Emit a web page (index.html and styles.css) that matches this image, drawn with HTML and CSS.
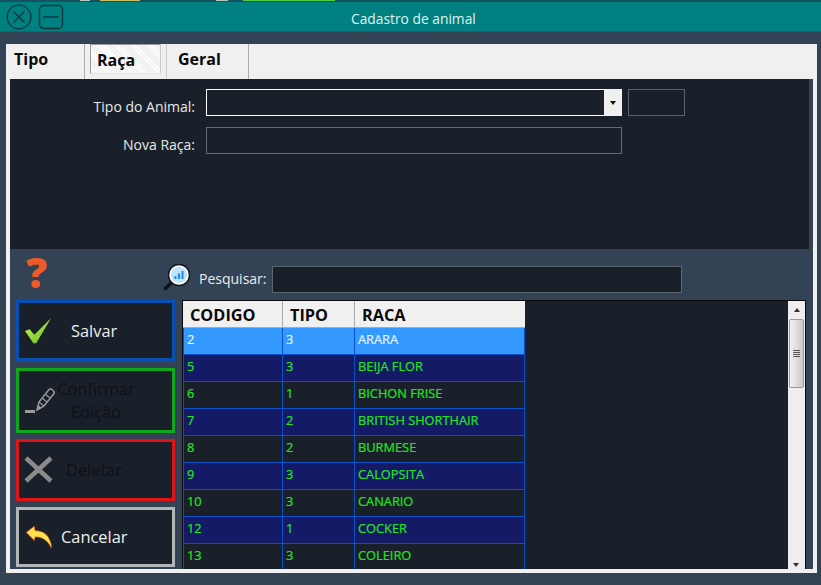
FILE: index.html
```html
<!DOCTYPE html>
<html lang="pt">
<head>
<meta charset="utf-8">
<title>Cadastro de animal</title>
<link rel="stylesheet" href="styles.css">
</head>
<body>
<div class="app">
  <header class="titlebar">
    <div class="winbtns">
      <svg class="winicon" width="26" height="26" viewBox="0 0 26 26"><circle cx="13" cy="13" r="11.800"/><path d="M7.500 7.500l11 11M18.500 7.500l-11 11"/></svg>
      <svg class="winicon" width="26" height="26" viewBox="0 0 26 26"><rect x="1.500" y="1.500" width="23" height="23" rx="4"/><path d="M5 13h16"/></svg>
    </div>
    <span class="wintitle">Cadastro de animal</span>
  </header>
  <main class="frame">
    <nav class="tabs">
      <span class="tab tab-tipo">Tipo</span>
      <span class="tab tab-raca">Raça</span>
      <span class="tab tab-geral">Geral</span>
    </nav>
    <section class="panel">
      <section class="form">
        <div class="formrow">
          <label class="flabel">Tipo do Animal:</label>
          <div class="combo"><span class="combo-arrow"></span></div>
          <div class="smallbox"></div>
        </div>
        <div class="formrow">
          <label class="flabel">Nova Raça:</label>
          <div class="input"></div>
        </div>
      </section>
      <section class="lower">
        <div class="toolbar">
          <span class="help">?</span>
          <svg class="searchicon" width="28" height="28" viewBox="0 0 28 28">
            <path d="M10 18L2.500 25.500" stroke="#111" stroke-width="3.500" stroke-linecap="round"/>
            <circle cx="16" cy="12" r="10.500" fill="#fff" stroke="#14181e" stroke-width="1.500"/>
            <circle cx="16" cy="12" r="8" fill="#bfe2ff"/>
            <path d="M11.500 13h2v3h-2zM15 10.500h2V16h-2zM18.500 8h2v8h-2z" fill="#1e88e5"/>
          </svg>
          <label class="searchlabel">Pesquisar:</label>
          <div class="searchinput"></div>
        </div>
        <div class="workarea">
          <div class="actions">
            <button class="action action-save">
              <svg class="aicon" width="30" height="28" viewBox="0 0 32 30"><defs><linearGradient id="chk" x1="0" y1="0" x2="1" y2="1"><stop offset="0" stop-color="#d2f05a"/><stop offset="1" stop-color="#5cc01e"/></linearGradient></defs><path d="M1 15l5-2 5 6L29 1 13 28h-3z" fill="url(#chk)"/></svg>
              <span class="alabel label-save">Salvar</span>
            </button>
            <button class="action action-edit">
              <svg class="aicon" width="32" height="30" viewBox="0 0 32 30" fill="none" stroke="#9a9a9a"><path d="M1 25.500h10" stroke-width="3"/><path d="M13 24l2-8L25 3.500c2-1.500 6 1.500 5 4L20 20z" stroke-width="1.500" fill="#1a2029"/><path d="M15 16l5 4M18 12l5 4M21 8l5 4" stroke-width="1.200"/><path d="M13 24l2-4 2 2z" fill="#9a9a9a"/></svg>
              <span class="alabel label-edit">Confirmar Edição</span>
            </button>
            <button class="action action-del">
              <svg class="aicon" width="32" height="32" viewBox="0 0 32 32"><path d="M2 4l25 23M27 4L2 27" stroke="#8b8b8b" stroke-width="4.500" fill="none"/></svg>
              <span class="alabel label-del">Deletar</span>
            </button>
            <button class="action action-cancel">
              <svg class="aicon" width="30" height="24" viewBox="0 0 30 26"><path d="M1 8l9-7 1 5c9 0 16 5 18 18l-1 1C25 17 18 13 11 13l-1 4z" fill="#ffe14d" stroke="#a5281c" stroke-width=".8"/></svg>
              <span class="alabel label-cancel">Cancelar</span>
            </button>
          </div>
          <div class="grid">
            <div class="gridbody">
              <table class="table">
                <thead><tr><th class="c1">CODIGO</th><th class="c2">TIPO</th><th class="c3">RACA</th></tr></thead>
                <tbody>
                  <tr class="sel"><td>2</td><td>3</td><td>ARARA</td></tr>
                  <tr class="alt"><td>5</td><td>3</td><td>BEIJA FLOR</td></tr>
                  <tr><td>6</td><td>1</td><td>BICHON FRISE</td></tr>
                  <tr class="alt"><td>7</td><td>2</td><td>BRITISH SHORTHAIR</td></tr>
                  <tr><td>8</td><td>2</td><td>BURMESE</td></tr>
                  <tr class="alt"><td>9</td><td>3</td><td>CALOPSITA</td></tr>
                  <tr><td>10</td><td>3</td><td>CANARIO</td></tr>
                  <tr class="alt"><td>12</td><td>1</td><td>COCKER</td></tr>
                  <tr><td>13</td><td>3</td><td>COLEIRO</td></tr>
                </tbody>
              </table>
            </div>
            <div class="scrollbar">
              <span class="arrow-up"></span>
              <div class="thumb"><span class="grip"></span></div>
              <span class="arrow-down"></span>
            </div>
          </div>
        </div>
      </section>
    </section>
  </main>
</div>
</body>
</html>
```
FILE: styles.css
```css
* { box-sizing: border-box; }
html, body { margin: 0; padding: 0; height: 100%; overflow: hidden; }
body { font-family: "Open Sans", "Noto Sans", sans-serif; background: #334355; }
.app { width: 821px; height: 585px; display: flex; flex-direction: column; background: #334355; }

.titlebar { height: 32px; flex: none; background: #008080; border-top: 2px solid #17505e; border-bottom: 1px solid #2d5c63; display: flex; align-items: center; position: relative; }
.titlebar::before { content: ""; position: absolute; left: 0; right: 0; top: -2px; height: 1px; background: linear-gradient(90deg, transparent 80px, #b9c4bc 80px 90px, transparent 90px 100px, #c8c060 100px 140px, transparent 140px 216px, #b9c4bc 216px 228px, transparent 228px 243px, #4fd040 243px 335px, transparent 335px); }
.winbtns { display: flex; gap: 6px; margin-left: 6px; margin-top: 1px; }
.winicon { fill: none; stroke: #14333c; stroke-width: 1.300; display: block; }
.wintitle { position: absolute; left: 351px; top: 8px; color: #dff4f2; font-size: 13.800px; line-height: 18px; }

.frame { flex: none; margin: 12px 4px 0 6px; height: 529px; background: #f0f0f0; display: flex; flex-direction: column; }
.tabs { height: 35px; flex: none; display: flex; align-items: stretch; background: #f0f0f0; font-size: 16px; font-weight: 700; color: #0a0a0a; }
.tab { display: flex; align-items: center; border-right: 1px solid #aaa; padding-bottom: 6px; }
.tab-tipo { width: 79px; padding-left: 8px; }
.tab-raca { width: 71px; margin-left: 5px; padding-left: 6px; margin-bottom: 5px; border: 1px solid #999; border-bottom-color: #e4e4e4; border-right-color: #ccc; background: repeating-linear-gradient(45deg, #fff 0 1px, #ececec 1px 2px); padding-bottom: 0; padding-top: 2px; height: 30px; }
.tab-geral { width: 83px; margin-left: 5px; padding-left: 11px; border-left: 1px solid #ccc; }

.panel { flex: 1; margin: 0 4px 4px; background: #334355; display: flex; flex-direction: column; min-height: 0; }
.form { height: 170px; flex: none; width: 799px; background: #1a2029; padding-top: 10px; display: flex; flex-direction: column; gap: 11px; }
.formrow { display: flex; align-items: center; }
.flabel { width: 196px; text-align: right; color: #e8e8e8; font-size: 14px; padding-right: 11px; padding-top: 7px; flex: none; }
.combo { width: 416px; height: 27px; border: 1px solid #fff; position: relative; background: #1a2029; }
.combo-arrow { position: absolute; right: -1px; top: -1px; bottom: -1px; width: 18px; background: #f0f0f0; }
.combo-arrow::after { content: ""; position: absolute; left: 6px; top: 12px; border: 3px solid transparent; border-top: 4px solid #111; border-bottom: 0; }
.smallbox { width: 57px; height: 27px; margin-left: 6px; border: 1px solid #5c6165; }
.input { width: 416px; height: 27px; border: 1px solid #666a6e; }

.lower { flex: 1; min-height: 0; display: flex; flex-direction: column; }
.toolbar { height: 51px; flex: none; display: flex; align-items: flex-start; position: relative; padding-left: 153px; }
.help { position: absolute; left: 16px; top: -1px; color: #f05a28; font-size: 42px; font-weight: 800; line-height: 48px; }
.searchicon { margin-top: 14px; flex: none; }
.searchlabel { margin-left: 8px; margin-top: 21px; color: #ececec; font-size: 14px; line-height: 18px; }
.searchinput { width: 410px; height: 27px; margin-left: 5px; margin-top: 17px; background: #1a2029; border: 1px solid #5c6670; }

.workarea { flex: 1; min-height: 0; display: flex; padding-left: 6px; }
.actions { width: 166px; flex: none; display: flex; flex-direction: column; }
.action { width: 159px; border: 3px solid; background: #1a2029; display: flex; align-items: center; padding: 0 0 0 5px; font-family: inherit; font-size: 16.400px; position: relative; }
.action-save { height: 61px; border-color: #0a50b4; margin-bottom: 7px; }
.action-edit { height: 65px; border-color: #0fa81c; margin-bottom: 6px; }
.action-del { height: 62px; border-color: #e01414; margin-bottom: 6px; }
.action-cancel { height: 60px; border-color: #b2b4b6; }
.aicon { flex: none; display: block; }
.alabel { display: block; text-align: center; line-height: 23px; }
.label-save { margin-left: 17px; color: #eee; }
.label-edit { width: 90px; margin-left: -5px; margin-bottom: 2px; color: #0e1116; }
.label-del { margin-left: 10px; margin-bottom: 2px; color: #0e1116; }
.label-cancel { margin-left: 7px; margin-bottom: 2px; color: #eee; }

.grid { width: 624px; height: 269px; flex: none; background: #1a2029; border: 1px solid #0a0a0a; border-bottom: 0; display: flex; overflow: hidden; }
.gridbody { flex: 1; min-width: 0; overflow: hidden; }
.table { border-collapse: separate; border-spacing: 0; table-layout: fixed; width: 342px; font-size: 12.800px; }
.table th { height: 27px; background: #f0f0f0; color: #0a0a0a; font-size: 16.300px; font-weight: 700; text-align: left; padding: 1px 0 0 7px; border-right: 1px solid #aaa; border-bottom: 1px solid #aaa; }
.table th.c1 { width: 100px; }
.table th.c2 { width: 72px; }
.table th.c3 { width: 170px; border-right: 0; }
.table td { height: 27px; padding: 0 0 5px 3px; color: #20e620; -webkit-text-stroke: .2px currentColor; border: 1px solid #0a50c8; border-width: 0 1px 1px 0; }
.table td:first-child { border-left: 1px solid #0a50c8; }
.table tr.alt td { background: #141a66; }
.table tr.sel td { background: #3399ff; color: #e8f4ff; }

.scrollbar { width: 17px; flex: none; background: #eeeeee; position: relative; display: flex; flex-direction: column; align-items: center; }
.arrow-up { margin-top: 7px; border: 3px solid transparent; border-bottom: 4px solid #333; border-top: 0; }
.thumb { width: 15px; height: 69px; margin-top: 7px; border: 1px solid #999; border-radius: 2px; background: linear-gradient(90deg, #f2f2f2, #c9c9cc); display: flex; align-items: center; justify-content: center; }
.grip { width: 7px; height: 7px; background: repeating-linear-gradient(#555 0 1px, transparent 1px 2px); }
.arrow-down { position: absolute; bottom: 2px; left: 5px; border: 3px solid transparent; border-top: 4px solid #333; border-bottom: 0; }
```
